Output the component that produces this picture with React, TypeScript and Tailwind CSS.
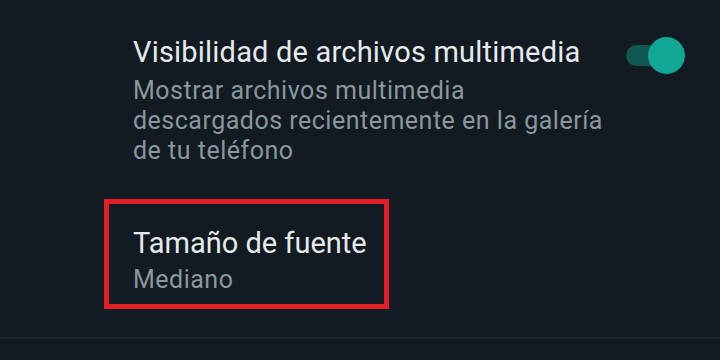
import React from 'react';

function Toggle({ on }: { on: boolean }) {
  return (
    <div className="relative w-[59px] h-[38px] flex items-center">
      <div className={`w-[44px] h-[21px] rounded-full ${on ? 'bg-[#0f5751]' : 'bg-[#3b4a54]'}`} />
      <div
        className={`absolute top-[0.5px] w-[37px] h-[37px] rounded-full ${
          on ? 'right-0 bg-[#12a895]' : 'left-0 bg-[#aebac1]'
        }`}
      />
    </div>
  );
}

export default function App() {
  return (
    <div
      className="w-[720px] h-[360px] overflow-hidden bg-[#111b21] text-[#e6eaec]"
      style={{ fontFamily: 'Roboto, "Noto Sans", sans-serif' }}
    >
      <div className="flex items-start pl-[133px] pr-[35px] pt-[35px]">
        <div className="flex-1">
          <div className="text-[29px] leading-[34px] tracking-[0.2px]">Visibilidad de archivos multimedia</div>
          <div className="mt-[6.5px] text-[25px] leading-[30px] tracking-[0.5px] text-[#8b979e]">
            Mostrar archivos multimedia
            <br />
            descargados recientemente en la galería
            <br />
            de tu teléfono
          </div>
        </div>
        <div className="pt-[1px]">
          <Toggle on />
        </div>
      </div>

      <div className="ml-[104px] mt-[33.5px] w-[285px] h-[110px] border-[5px] border-[#e31e24] pl-[24px] pt-[22px]">
        <div className="text-[29px] leading-[34px]">Tamaño de fuente</div>
        <div className="mt-[5px] text-[25px] leading-[30px] tracking-[0.5px] text-[#8b979e]">Mediano</div>
      </div>

      <div className="mt-[28px] h-[2px] bg-[#19252c]" />
    </div>
  );
}
